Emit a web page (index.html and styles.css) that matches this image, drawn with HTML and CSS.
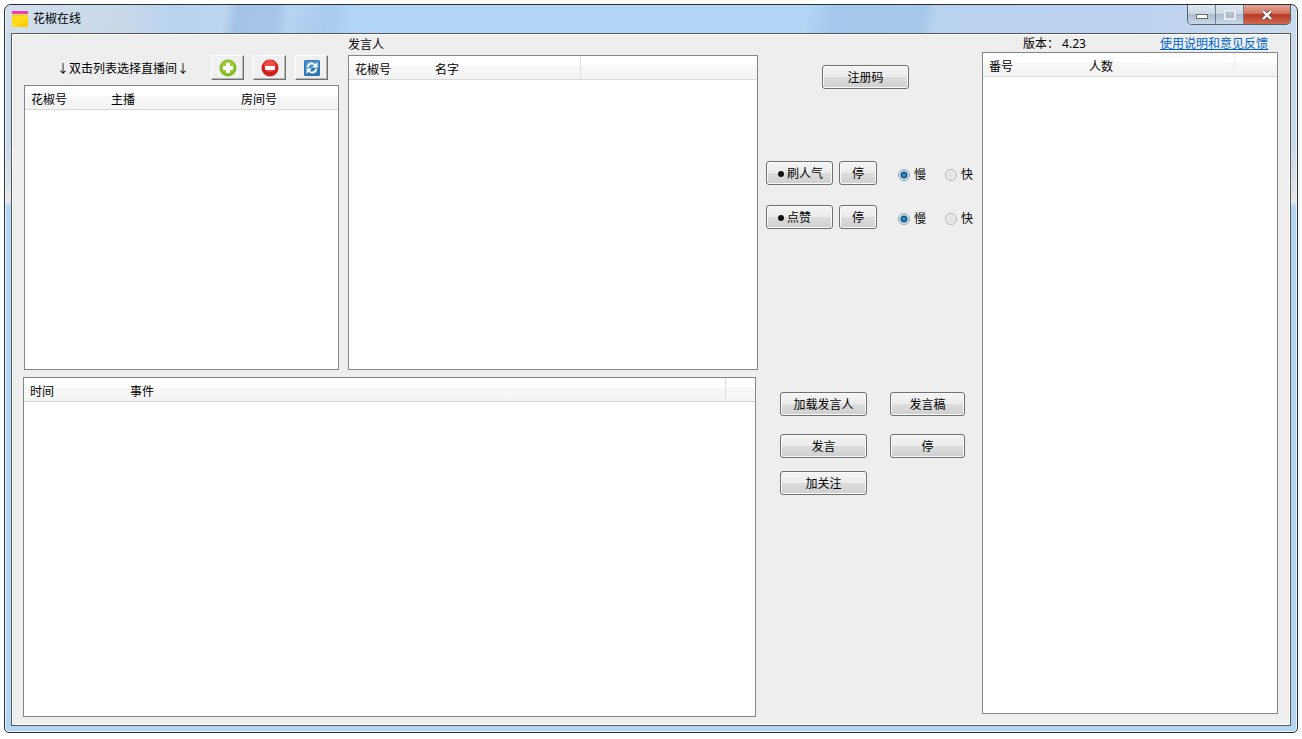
FILE: index.html
```html
<!DOCTYPE html>
<html lang="zh-CN">
<head>
<meta charset="utf-8">
<title>花椒在线</title>
<link rel="stylesheet" href="styles.css">
</head>
<body>
<div class="window">
  <header class="titlebar">
    <svg class="app-icon" viewBox="0 0 16 16" aria-hidden="true"><rect width="16" height="16" fill="#fc0"/><path d="M0 5h16v3L4 16H0z" fill="#ffdb1c"/><rect width="16" height="3" fill="#f03cae"/><rect y="3" width="16" height="1" fill="#ffd9a0"/></svg>
    <h1 class="title">花椒在线</h1>
    <div class="caption-buttons">
      <button class="caption" type="button" aria-label="最小化"><svg viewBox="0 0 14 10"><rect x="1.500" y="4.500" width="11" height="4" fill="#fff" stroke="#667"/></svg></button>
      <button class="caption" type="button" aria-label="最大化" disabled><svg viewBox="0 0 14 10"><rect x="2" y="1" width="10" height="8" fill="none" stroke="#e6ebf0" stroke-width="2"/><rect x="3.500" y="2.500" width="7" height="5" fill="none" stroke="#a9b2bc"/></svg></button>
      <button class="caption close" type="button" aria-label="关闭"><svg viewBox="0 0 14 10"><path d="M3 1l8 8M11 1L3 9" stroke="#744" stroke-width="4"/><path d="M3 1l8 8M11 1L3 9" stroke="#fff" stroke-width="2.400"/></svg></button>
    </div>
  </header>
  <main class="client">
    <div class="lists">
      <div class="top-lists">
        <section class="rooms">
          <div class="toolbar">
            <span class="hint">↓双击列表选择直播间↓</span>
            <button class="tool" type="button" aria-label="添加"><svg viewBox="0 0 18 18"><circle cx="9" cy="9" r="8.500" fill="#83bd21"/><circle cx="9" cy="8" r="6.500" fill="#9ccf35"/><path d="M7 4h4v3h3v4h-3v3H7v-3H4V7h3z" fill="#fff"/></svg></button>
            <button class="tool" type="button" aria-label="删除"><svg viewBox="0 0 18 18"><circle cx="9" cy="9" r="8.500" fill="#cf1f1f"/><circle cx="9" cy="7" r="6" fill="#ee4c45"/><rect x="4" y="7" width="10" height="4" rx="1" fill="#fff"/></svg></button>
            <button class="tool" type="button" aria-label="刷新"><svg viewBox="0 0 18 18"><rect x="1" y="1" width="16" height="16" rx="1.500" fill="#2f78b7"/><rect x="2" y="2" width="14" height="7" fill="#4a92cc"/><path d="M4.500 8.500Q5 5 8 4.500t4 2M13.500 9.500Q13 13 10 13.500t-4-2" fill="none" stroke="#fff" stroke-width="1.800"/><path d="M14.500 3v5.500H9zM3.500 15V9.500H9z" fill="#fff"/></svg></button>
          </div>
          <div class="list">
            <table class="table">
              <colgroup><col class="w80"><col class="w130"><col></colgroup>
              <thead><tr><th>花椒号</th><th>主播</th><th>房间号</th></tr></thead>
            </table>
          </div>
        </section>
        <section class="speakers">
          <h2 class="label">发言人</h2>
          <div class="list">
            <table class="table">
              <colgroup><col class="w80"><col class="w151"><col></colgroup>
              <thead><tr><th>花椒号</th><th class="sep">名字</th><th></th></tr></thead>
            </table>
          </div>
        </section>
      </div>
      <div class="list log">
        <table class="table">
          <colgroup><col class="w100"><col><col class="w30"></colgroup>
          <thead><tr><th>时间</th><th class="sep">事件</th><th></th></tr></thead>
        </table>
      </div>
    </div>

    <div class="controls">
      <div class="upper">
        <button class="btn register" type="button">注册码</button>
        <div class="rate">
          <button class="btn main" type="button"><span class="dot"></span>刷人气</button>
          <button class="btn stop" type="button">停</button>
          <label class="radio"><input type="radio" name="popularity" checked>慢</label>
          <label class="radio"><input type="radio" name="popularity">快</label>
        </div>
        <div class="rate">
          <button class="btn main" type="button"><span class="dot"></span>点赞</button>
          <button class="btn stop" type="button">停</button>
          <label class="radio"><input type="radio" name="like" checked>慢</label>
          <label class="radio"><input type="radio" name="like">快</label>
        </div>
      </div>
      <div class="lower">
        <button class="btn" type="button">加载发言人</button>
        <button class="btn" type="button">发言稿</button>
        <button class="btn" type="button">发言</button>
        <button class="btn" type="button">停</button>
        <button class="btn" type="button">加关注</button>
      </div>
    </div>

    <section class="numbers">
      <div class="info">
        <span>版本： 4.23</span>
        <a class="help" href="#">使用说明和意见反馈</a>
      </div>
      <div class="list">
        <table class="table">
          <colgroup><col class="w100"><col class="w151"><col></colgroup>
          <thead><tr><th>番号</th><th class="sep faint">人数</th><th></th></tr></thead>
        </table>
      </div>
    </section>
  </main>
</div>
</body>
</html>
```
FILE: styles.css
```css
* { box-sizing: border-box; }

body {
  margin: 0;
  padding: 4px 4px 6px;
  height: 100vh;
  background: #fff;
  color: #000;
  font: 12px/16px "Noto Sans", "Noto Sans CJK SC", sans-serif;
}

button { font: inherit; color: inherit; }

.window {
  display: flex;
  flex-direction: column;
  height: 100%;
  padding: 0 6px 6px;
  border: 1px solid #2b3038;
  border-radius: 7px 7px 5px 5px;
  background: linear-gradient(#c9d9ea 0, #c9d9ea 140px, #dfe1e4 180px, #e8e8ea 196px, #b3d5f2 202px, #b3d5f2 100%);
  box-shadow: inset 0 0 0 1px #eaf4fc;
}

.titlebar {
  display: flex;
  align-items: center;
  height: 28px;
  margin: 0 -5px;
  padding-left: 6px;
  border-radius: 6px 6px 0 0;
  background: linear-gradient(100deg, #d3dfeb 0, #c9d9ea 9%, #b9d3ee 13%, #bcd6f0 17%, #a3c3e6 18%, #a6c6e9 21%, #b4d4f3 22%, #a9cbee 25%, #b0d5f5 27%, #b0d5f5 62%, #a5c9ec 64%, #a5c8ea 71%, #b9d2f0 72%, #bdd2f0 88%, #c9dced 100%);
}

.app-icon { width: 16px; height: 16px; }

.title {
  flex: 1;
  margin: 0 0 0 5px;
  font-size: 12px;
  font-weight: 400;
}

.caption-buttons {
  display: flex;
  align-self: flex-start;
  margin-right: 5px;
  border: 1px solid #55606e;
  border-top: 0;
  border-radius: 0 0 5px 5px;
  overflow: hidden;
}

.caption {
  display: grid;
  place-items: center;
  width: 28px;
  height: 19px;
  padding: 0;
  border: 0;
  border-right: 1px solid #77818d;
  background: linear-gradient(#e0e8f0 0, #ccd8e4 45%, #acbccd 50%, #c9d9e8 100%);
}

.caption svg { width: 14px; height: 10px; }

.caption.close {
  width: 46px;
  border-right: 0;
  background: linear-gradient(#e5a496 0, #d2705e 45%, #b93a25 50%, #d06850 100%);
}

.client {
  display: flex;
  flex: 1;
  min-height: 0;
  border: 1px solid #545960;
  padding: 0 12px 8px 11px;
  background: #eee;
  box-shadow: inset 0 0 0 1px #fff;
}

.lists {
  display: flex;
  flex-direction: column;
  flex: 735 1 0;
  gap: 7px;
}

.top-lists {
  display: flex;
  flex: 337 1 0;
  gap: 9px;
  padding-left: 1px;
}

.rooms { flex: 315 1 0; }
.speakers { flex: 410 1 0; }

.rooms, .speakers, .numbers {
  display: flex;
  flex-direction: column;
  min-width: 0;
}

.toolbar {
  display: flex;
  align-items: center;
  justify-content: flex-end;
  gap: 9px;
  height: 51px;
  padding: 16px 11px 0 0;
}

.hint {
  margin-right: 13px;
  padding-top: 1px;
  font-family: "Noto Sans CJK SC", sans-serif;
  white-space: nowrap;
}

.tool {
  display: grid;
  place-items: center;
  width: 33px;
  height: 25px;
  padding: 0;
  border: 1px solid #fff;
  border-right-color: #707070;
  border-bottom-color: #707070;
  background: #f0f0f0;
  box-shadow: inset -1px -1px #b8b8b8;
}

.tool svg { width: 18px; height: 18px; }

.label {
  height: 21px;
  margin: 0;
  padding-top: 3px;
  font-size: 12px;
  font-weight: 400;
}

.list {
  flex: 1;
  border: 1px solid #82868c;
  background: #fff;
}

.log { flex: 339 1 0; margin-right: 2px; }

.table {
  width: 100%;
  table-layout: fixed;
  border-collapse: collapse;
}

.w30 { width: 30px; }
.w80 { width: 80px; }
.w100 { width: 100px; }
.w130 { width: 130px; }
.w151 { width: 151px; }

.table th {
  height: 23px;
  padding: 6px 0 0 6px;
  border-bottom: 1px solid #d8d8d8;
  background: linear-gradient(#fff 0, #fff 40%, #f7f7f8 45%, #f4f4f5 100%);
  font-weight: 400;
  line-height: 16px;
  text-align: left;
}

.table .sep { border-right: 1px solid #dedfe1; }
.table .faint { border-right-color: #eee; }

.controls {
  display: flex;
  flex-direction: column;
  width: 224px;
  padding: 0 6px 0 8px;
}

.upper {
  display: flex;
  flex-direction: column;
  flex: 327 1 0;
  padding-top: 31px;
}

.btn {
  display: flex;
  align-items: center;
  justify-content: center;
  height: 24px;
  padding: 2px 0 0;
  border: 1px solid #707070;
  border-radius: 3px;
  background: linear-gradient(#f4f4f4 0, #ececec 48%, #dcdcdc 52%, #cfcfcf 100%);
  box-shadow: inset 0 0 0 1px #fbfbfb;
}

.register { width: 87px; margin: 0 0 72px 56px; }

.rate {
  display: flex;
  align-items: center;
  margin-bottom: 20px;
}

.main {
  justify-content: flex-start;
  width: 67px;
  margin-right: 6px;
  padding-left: 11px;
}

.stop { width: 38px; margin-right: 21px; }

.dot {
  width: 6px;
  height: 6px;
  margin-right: 3px;
  border-radius: 50%;
  background: #111;
}

.radio {
  display: flex;
  align-items: center;
  gap: 4px;
  margin-right: 19px;
  padding-top: 3px;
}

.radio:last-child { margin-right: 0; }

.radio input {
  appearance: none;
  width: 12px;
  height: 12px;
  margin: 0;
  border: 1px solid #b0b4b8;
  border-radius: 50%;
  background: radial-gradient(circle, #dcdcdc 0, #f5f5f5 100%);
}

.radio input:checked {
  border-color: #8f9fae;
  background: radial-gradient(circle, #39b6e8 0, #0d4a80 3px, #d9e7f1 4px);
}

.lower {
  display: grid;
  grid-template-columns: 87px 75px;
  grid-template-rows: 29px 24px 24px;
  align-content: start;
  align-items: start;
  gap: 13px 23px;
  flex: 325 1 0;
  padding-left: 14px;
}

.lower .btn { width: 100%; }

.numbers { flex: 296 1 0; }

.numbers .list { margin-bottom: 3px; }

.info {
  display: flex;
  justify-content: space-between;
  height: 18px;
  padding: 2px 10px 0 41px;
}

.help { color: #0066cc; }
```
